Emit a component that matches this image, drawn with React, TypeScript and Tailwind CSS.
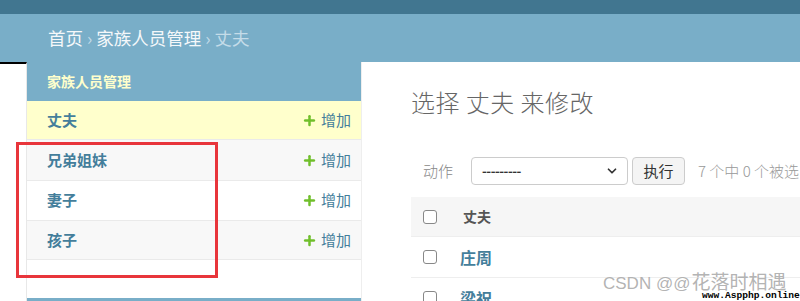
import { Plus, ChevronDown } from "lucide-react";

const MODELS = [
  { name: "丈夫", h: "h-[39px] bg-[#ffffcc]" },
  { name: "兄弟姐妹", h: "h-[41px] bg-[#f8f8f8]" },
  { name: "妻子", h: "h-[40px] bg-white" },
  { name: "孩子", h: "h-[39px] bg-[#f8f8f8]" },
];

const ROWS = ["庄周", "梁祝"];

const font = { fontFamily: '"Noto Sans CJK SC", "Noto Sans", sans-serif' };

function Checkbox() {
  return <span className="block w-[14px] h-[14px] rounded-[3px] border border-[#888] bg-white" />;
}

export default function App() {
  return (
    <div className="relative w-[800px] h-[301px] overflow-hidden bg-white" style={font}>
      {/* top header */}
      <div className="h-[14px] bg-[#417690]" />

      {/* breadcrumbs */}
      <div className="h-[48px] bg-[#79aec8] flex items-center pl-[48px] text-[17.5px] text-[#f5f8fa]">
        <span>首页</span>
        <span className="mx-[4px] text-[#c4dce8]">›</span>
        <span>家族人员管理</span>
        <span className="mx-[4px] text-[#c4dce8]">›</span>
        <span className="text-[#c4dce8]">丈夫</span>
      </div>

      <div className="flex">
        {/* left gutter */}
        <div className="w-[27px] h-[240px] border-t-2 border-black border-r border-r-[#e8e8e8]" />

        {/* sidebar */}
        <div className="w-[335px] shrink-0 border-r border-[#eee] flex flex-col">
          <div className="h-[39px] bg-[#79aec8] flex items-center pl-[20px] text-[14px] font-bold text-[#ffffcc]">
            家族人员管理
          </div>
          {MODELS.map((m) => (
            <div
              key={m.name}
              className={"flex items-center justify-between pl-[20px] pr-[10px] border-b border-[#eaeaea] " + m.h}
            >
              <span className="text-[15px] font-bold text-[#447e9b]">{m.name}</span>
              <span className="flex items-center gap-[4px] text-[15px] text-[#447e9b]">
                <Plus size={15} strokeWidth={4} className="text-[#70bf2b]" />
                增加
              </span>
            </div>
          ))}
          <div className="h-[38px]" />
          <div className="h-[10px] bg-[#79aec8]" />
        </div>

        {/* main content */}
        <div className="flex-1 pl-[49px] pt-[24px] overflow-hidden">
          <h1 className="text-[24px] font-light text-[#666] leading-[32px] tracking-[0.5px]">选择 丈夫 来修改</h1>

          <div className="mt-[39px] flex items-center h-[28px] whitespace-nowrap">
            <span className="ml-[12px] text-[15px] text-[#888] font-light">动作</span>
            <div className="ml-[18px] w-[157px] h-[28px] border border-[#ccc] rounded-[4px] flex items-center justify-between pl-[10px] pr-[8px]">
              <span className="text-[13px] text-[#333] font-bold tracking-[-0.5px]">---------</span>
              <ChevronDown size={14} strokeWidth={3} className="text-[#333]" />
            </div>
            <div className="ml-[4px] w-[53px] h-[28px] border border-[#ccc] rounded-[4px] bg-[#f4f4f4] flex items-center justify-center text-[15px] text-[#333]">
              执行
            </div>
            <span className="ml-[13px] text-[15px] text-[#999] font-light">7 个中 0 个被选</span>
          </div>

          <div className="mt-[12px]">
            <div className="h-[40px] bg-[#f6f6f6] border-b border-[#eee] flex items-center pl-[12px]">
              <Checkbox />
              <span className="ml-[26px] text-[14px] font-bold text-[#555]">丈夫</span>
            </div>
            {ROWS.map((r) => (
              <div key={r} className="h-[41px] border-b border-[#eee] flex items-center pl-[12px]">
                <Checkbox />
                <span className="ml-[23px] text-[16px] font-bold text-[#447e9b]">{r}</span>
              </div>
            ))}
          </div>
        </div>
      </div>

      {/* red annotation box */}
      <div className="absolute left-[16px] top-[142px] w-[202px] h-[136px] border-[3px] border-[#e8353b]" />

      {/* watermark */}
      <div className="absolute left-[603px] top-[272px] flex items-baseline leading-[17px] text-[#aaa]/90 whitespace-nowrap">
        <span className="text-[17px]" style={{ fontFamily: '"Liberation Sans", sans-serif' }}>
          CSDN @@
        </span>
        <span className="text-[19px] ml-[1px]">花落时相遇</span>
      </div>
      <div
        className="absolute left-[702px] top-[291px] text-[9.6px] font-bold text-black leading-none whitespace-nowrap"
        style={{ fontFamily: '"Liberation Mono", monospace' }}
      >
        www.Aspphp.online
      </div>
    </div>
  );
}
